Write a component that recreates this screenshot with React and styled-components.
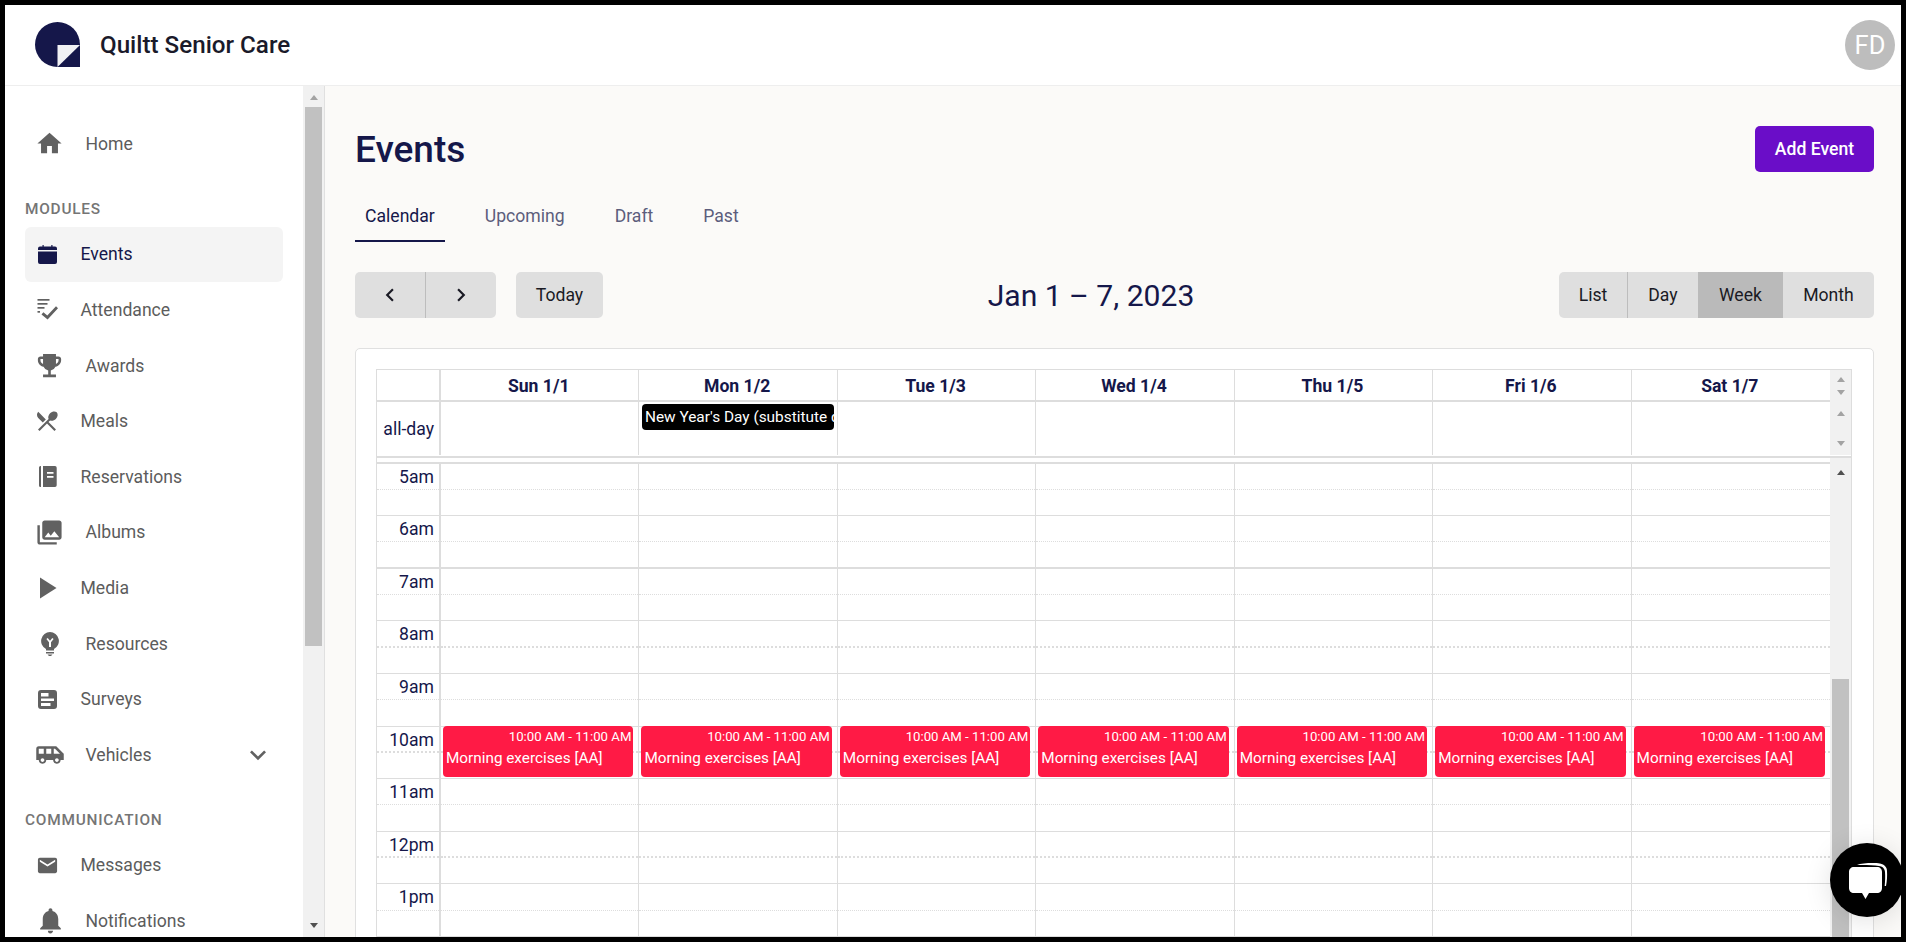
import React from "react";
import styled, { createGlobalStyle } from "styled-components";
import {
  MdHome, MdEmojiEvents, MdRestaurantMenu, MdPhotoLibrary, MdPlayArrow,
  MdAirportShuttle, MdExpandMore, MdEmail, MdNotifications, MdChevronLeft, MdChevronRight,
} from "react-icons/md";

const NAVY = "#15174a";
const COLUMNS = "64px repeat(7, minmax(0, 1fr)) 21px";

const Global = createGlobalStyle`
  html, body { margin: 0; padding: 0; height: 100%; overflow: hidden; background: #000; }
  * { box-sizing: border-box; }
  body { font-family: Roboto, "Liberation Sans", sans-serif; }
`;

const Frame = styled.div`
  position: relative;
  width: 1906px;
  height: 942px;
  border: 5px solid #000;
  background: #fff;
  display: flex;
  flex-direction: column;
  overflow: hidden;
`;

const Header = styled.header`
  flex: 0 0 81px;
  display: flex;
  align-items: center;
  justify-content: space-between;
  padding: 0 6px 1px 30px;
  background: #fff;
  border-bottom: 1px solid #eeeeee;
`;

const Brand = styled.div`
  display: flex;
  align-items: center;
  gap: 20px;
`;

const BrandName = styled.span`
  font-size: 24.2px;
  font-weight: 500;
  color: #1a1a2a;
`;

const Avatar = styled.div`
  width: 50px;
  height: 50px;
  border-radius: 50%;
  background: #bdbdbd;
  color: #fff;
  font-size: 25.5px;
  display: flex;
  align-items: center;
  justify-content: center;
`;

const Body = styled.div`
  flex: 1;
  min-height: 0;
  display: flex;
`;

const Sidebar = styled.aside`
  flex: 0 0 320px;
  display: flex;
  border-right: 1px solid #e0e0e0;
  overflow: hidden;
`;

const Nav = styled.nav`
  flex: 0 0 298px;
  padding: 30px 20px 0;
  overflow: hidden;
`;

const NavRow = styled.div`
  height: 55.6px;
  display: flex;
  align-items: center;
  padding-left: 12px;
  padding-right: 9px;
  border-radius: 6px;
  font-size: 17.6px;
  font-weight: 400;
  color: ${(p) => (p.$active ? NAVY : "#5c5c5c")};
  background: ${(p) => (p.$active ? "#f4f4f4" : "transparent")};
`;

const NavIcon = styled.span`
  flex: 0 0 ${(p) => (p.$wide ? "48.5px" : "43.5px")};
  display: flex;
  align-items: center;
  padding-left: ${(p) => p.$shift || 0}px;
`;

const NavLabel = styled.span`
  flex: 1;
`;

const SectionLabel = styled.div`
  font-size: 15.4px;
  font-weight: 500;
  letter-spacing: 0.77px;
  color: #757575;
  height: ${(p) => p.$h}px;
  display: flex;
  align-items: flex-end;
  padding-bottom: ${(p) => p.$pb}px;
`;

const ScrollTrack = styled.div`
  flex: 0 0 ${(p) => p.$w || 21}px;
  background: #f1f1f1;
  display: flex;
  flex-direction: column;
  align-items: center;
  justify-content: ${(p) => p.$justify || "flex-start"};
  padding-top: ${(p) => p.$pt || 0}px;
  padding-bottom: ${(p) => p.$pb || 0}px;
  gap: ${(p) => p.$gap || 0}px;
`;

const Arrow = styled.span`
  width: 0;
  height: 0;
  flex: none;
  border-left: 4.5px solid transparent;
  border-right: 4.5px solid transparent;
  ${(p) =>
    p.$down
      ? `border-top: 5px solid ${p.$color || "#a3a3a3"};`
      : `border-bottom: 5px solid ${p.$color || "#a3a3a3"};`}
`;

const Thumb = styled.div`
  flex: none;
  width: 17px;
  height: ${(p) => p.$h}px;
  margin-top: ${(p) => p.$mt}px;
  background: #c1c1c1;
`;

const Spring = styled.div`
  flex: 1;
`;

const Main = styled.main`
  flex: 1;
  min-width: 0;
  background: #fbfaf8;
  padding: 40px 27px 0 30px;
  overflow: hidden;
`;

const TitleRow = styled.div`
  display: flex;
  align-items: center;
  justify-content: space-between;
  height: 46px;
`;

const PageTitle = styled.h1`
  margin: 0;
  font-size: 37px;
  font-weight: 500;
  color: ${NAVY};
`;

const PrimaryButton = styled.button`
  width: 119px;
  height: 46px;
  border: 0;
  border-radius: 5px;
  background: #6a0dc8;
  color: #fff;
  font: 500 17.6px Roboto, sans-serif;
`;

const Tabs = styled.div`
  display: flex;
  gap: 30px;
  margin-top: 22px;
`;

const Tab = styled.div`
  height: 48px;
  padding: 0 10px 2px;
  display: flex;
  align-items: center;
  justify-content: center;
  font-size: 17.6px;
  font-weight: 400;
  color: ${(p) => (p.$active ? NAVY : "#5c5d7c")};
  border-bottom: 2px solid ${(p) => (p.$active ? NAVY : "transparent")};
`;

const Toolbar = styled.div`
  display: flex;
  justify-content: space-between;
  align-items: center;
  margin-top: 30px;
  height: 46px;
`;

const ToolLeft = styled.div`
  display: flex;
  gap: 20px;
`;

const RangeTitle = styled.h2`
  margin: 0 0 0 20px;
  font-size: 30.1px;
  font-weight: 400;
  color: ${NAVY};
`;

const ButtonGroup = styled.div`
  display: flex;
  border-radius: 5px;
  overflow: hidden;
`;

const CalButton = styled.button`
  width: ${(p) => p.$w}px;
  height: 46px;
  border: 0;
  border-right: ${(p) => (p.$divider ? "1px solid #bdbdbd" : "0")};
  border-radius: ${(p) => (p.$solo ? "5px" : "0")};
  background: ${(p) => (p.$active ? "#bababa" : "#dfdfdf")};
  color: #1a1a24;
  font: 400 17.6px Roboto, sans-serif;
  display: flex;
  align-items: center;
  justify-content: center;
  padding: 0;
`;

const Card = styled.section`
  margin-top: 30px;
  background: #fff;
  border: 1px solid #e0e0e0;
  border-radius: 5px;
  padding: 20px 21px 0 20px;
  height: 700px;
`;

const Table = styled.div`
  border: 1px solid #dddddd;
  border-bottom: 0;
`;

const HeadRow = styled.div`
  display: grid;
  grid-template-columns: ${COLUMNS};
  height: ${(p) => p.$h}px;
`;

const AxisHead = styled.div`
  border-right: 2px solid #dddddd;
  border-bottom: ${(p) => (p.$line ? "2px solid #dddddd" : "0")};
  display: flex;
  align-items: center;
  justify-content: flex-end;
  padding-right: 5px;
  font-size: 17.6px;
  color: ${NAVY};
`;

const DayHead = styled.div`
  min-width: 0;
  padding: ${(p) => (p.$pad ? "2px 3px 0 3px" : "1px 2px 0 0")};
  border-right: ${(p) => (p.$last ? "0" : "1px solid #dddddd")};
  border-bottom: ${(p) => (p.$line ? "2px solid #dddddd" : "0")};
  display: flex;
  align-items: ${(p) => (p.$pad ? "flex-start" : "center")};
  justify-content: center;
  font-size: 17.6px;
  font-weight: 700;
  color: ${NAVY};
`;

const AllDayEvent = styled.div`
  width: 100%;
  height: 26px;
  padding: 0 2.5px;
  background: #000;
  color: #fff;
  font-size: 15.4px;
  font-weight: 400;
  line-height: 26px;
  border-radius: 4px;
  white-space: nowrap;
  overflow: hidden;
`;

const Divider = styled.div`
  display: flex;
  height: 7.6px;
  margin-top: 1px;
  border-top: 2px solid #dddddd;
`;

const DividerFill = styled.div`
  flex: 1;
  border-bottom: 2px solid #dddddd;
`;

const DividerGutter = styled.div`
  flex: 0 0 21px;
  background: #f1f1f1;
`;

const TimeGrid = styled.div`
  display: grid;
  grid-template-columns: ${COLUMNS};
  height: 480px;
  overflow: hidden;
`;

const TimeAxis = styled.div`
  border-right: 2px solid #dddddd;
`;

const DayColumn = styled.div`
  min-width: 0;
  position: relative;
  border-right: ${(p) => (p.$last ? "0" : "1px solid #dddddd")};
`;

const Slot = styled.div`
  height: 26.3px;
  padding-right: 5px;
  text-align: right;
  font-size: 17.6px;
  line-height: 26px;
  color: ${NAVY};
  white-space: nowrap;
  border-bottom: ${(p) => (p.$thick ? 2 : 1)}px ${(p) => (p.$half ? "dotted" : "solid")} #dddddd;
`;

const EventBlock = styled.div`
  position: absolute;
  left: 2px;
  right: 5px;
  top: 262.5px;
  height: 51px;
  background: #ff1a45;
  border-radius: 4px;
  color: #fff;
  font-weight: 400;
  overflow: hidden;
`;

const EventTime = styled.div`
  font-size: 13.2px;
  text-align: right;
  padding: 3px 2px 0;
  line-height: 15px;
`;

const EventTitle = styled.div`
  font-size: 15.3px;
  padding: 5px 3px 0;
  line-height: 18px;
  white-space: nowrap;
`;

const ChatBubble = styled.div`
  position: absolute;
  left: 1825px;
  top: 838px;
  width: 74px;
  height: 74px;
  border-radius: 50%;
  background: #000;
  box-shadow: 0 4px 28px rgba(0, 0, 0, 0.12);
  display: flex;
  align-items: center;
  justify-content: center;
`;

const Logo = () => (
  <svg width="45" height="45" viewBox="0 0 45 45">
    <path d="M22.5 0A22.5 22.5 0 0 0 22.5 45H45V22.5A22.5 22.5 0 0 0 22.5 0Z" fill={NAVY} />
    <path d="M22.5 23H45L22.5 45Z" fill="#f1f1f4" />
  </svg>
);

const CalendarIcon = ({ color }) => (
  <svg width="19" height="19" viewBox="0 0 19 19">
    <path fill={color} d="M2 1.5h2.5V0h1.200v1.500h7.600V0h1.200v1.500H17a2 2 0 0 1 2 2V5H0V3.500a2 2 0 0 1 2-2ZM0 6.500h19V17a2 2 0 0 1-2 2H2a2 2 0 0 1-2-2Z" />
  </svg>
);

const AttendanceIcon = () => (
  <svg width="21" height="21" viewBox="0 0 21 21" fill="#616161">
    <rect x="0.5" y="0" width="12" height="1.7" />
    <rect x="0.5" y="4" width="10" height="1.7" />
    <rect x="0.5" y="8" width="7" height="1.7" />
    <rect x="0.5" y="12" width="2.5" height="1.7" />
    <path d="M19 7.300 21 9.300 10.600 20.500 4.500 15.500 6.400 13.300 10.300 16.500Z" />
  </svg>
);

const BookIcon = () => (
  <svg width="18" height="21" viewBox="0 0 18 21" fill="#616161">
    <path d="M0 1.500A1.500 1.500 0 0 1 1.500 0H2v21h-.5A1.500 1.500 0 0 1 0 19.500Z" />
    <path d="M4 0h12a1.700 1.700 0 0 1 1.700 1.700v17.600A1.700 1.700 0 0 1 16 21H4ZM8 6v1.800h6.500V6Zm0 4v1.800h6.500V10Z" fillRule="evenodd" />
  </svg>
);

const BulbIcon = () => (
  <svg width="18" height="24" viewBox="0 0 18 24" fill="#616161">
    <path fillRule="evenodd" d="M9 0a9 9 0 0 1 4 17v1.500H5V17A9 9 0 0 1 9 0ZM5.400 7 8 10.200V15h2v-4.800L12.600 7 11.300 6 9 8.800 6.700 6Z" />
    <path d="M5 20h8v1.500H5ZM6.500 22.500h5L10 24H8Z" />
  </svg>
);

const SurveyIcon = () => (
  <svg width="19" height="19" viewBox="0 0 19 19">
    <path fill="#616161" fillRule="evenodd" d="M3 0h13a3 3 0 0 1 3 3v13a3 3 0 0 1-3 3H3a3 3 0 0 1-3-3V3a3 3 0 0 1 3-3Zm0 3v3.500h7.500V3Zm0 5.500v2.500h13V8.500Zm0 4.500v3h9.500v-3Z" />
  </svg>
);

const ChatIcon = () => (
  <svg width="42" height="42" viewBox="0 0 42 42" fill="#fff">
    <path d="M11 6C16 4 28 3.500 34 4.500 38.500 5.500 41 8 41 12c.3 5 0 10-1 15h-1.300c.5-5 .6-10 .3-14C38.700 9 36 7.300 33 7 27 6 18 5.700 11 6Z" />
    <path d="M8 8h23c3 0 5 2 5 5v16c0 3-2 5-5 5h-8l-3.500 6-3.500-6H8c-3 0-5-2-5-5V13c0-3 2-5 5-5Z" />
  </svg>
);

const NavItem = ({ icon, label, wide, active, shift, trailing }) => (
  <NavRow $active={active}>
    <NavIcon $wide={wide} $shift={shift}>{icon}</NavIcon>
    <NavLabel>{label}</NavLabel>
    {trailing}
  </NavRow>
);

const days = ["Sun 1/1", "Mon 1/2", "Tue 1/3", "Wed 1/4", "Thu 1/5", "Fri 1/6", "Sat 1/7"];
const hours = ["5am", "6am", "7am", "8am", "9am", "10am", "11am", "12pm", "1pm", ""];
const thickFull = new Set(["6am"]);
const thickHalf = new Set(["8am", "10am", "12pm"]);

const Slots = ({ labels }) =>
  hours.map((h) => (
    <React.Fragment key={h}>
      <Slot $half $thick={thickHalf.has(h)}>{labels ? h : null}</Slot>
      <Slot $thick={thickFull.has(h)} />
    </React.Fragment>
  ));

export default function App() {
  const gray = "#616161";
  return (
    <>
      <Global />
      <Frame>
        <Header>
          <Brand>
            <Logo />
            <BrandName>Quiltt Senior Care</BrandName>
          </Brand>
          <Avatar>FD</Avatar>
        </Header>
        <Body>
          <Sidebar>
            <Nav>
              <NavItem wide label="Home" icon={<MdHome size={29} color={gray} style={{ marginLeft: -2 }} />} />
              <SectionLabel $h={55} $pb={9}>MODULES</SectionLabel>
              <NavItem active shift={1} label="Events" icon={<CalendarIcon color={NAVY} />} />
              <NavItem label="Attendance" icon={<AttendanceIcon />} />
              <NavItem wide label="Awards" icon={<MdEmojiEvents size={31} color={gray} style={{ marginLeft: -3 }} />} />
              <NavItem label="Meals" icon={<MdRestaurantMenu size={26} color={gray} style={{ marginLeft: -3 }} />} />
              <NavItem shift={2} label="Reservations" icon={<BookIcon />} />
              <NavItem wide label="Albums" icon={<MdPhotoLibrary size={29} color={gray} style={{ marginLeft: -2 }} />} />
              <NavItem label="Media" icon={<MdPlayArrow size={36} color={gray} style={{ marginLeft: -9, marginRight: -9 }} />} />
              <NavItem wide shift={4} label="Resources" icon={<BulbIcon />} />
              <NavItem shift={1} label="Surveys" icon={<SurveyIcon />} />
              <NavItem wide label="Vehicles" icon={<MdAirportShuttle size={30} color={gray} style={{ marginLeft: -2 }} />} trailing={<MdExpandMore size={32} color={gray} />} />
              <SectionLabel $h={55} $pb={9}>COMMUNICATION</SectionLabel>
              <NavItem label="Messages" icon={<MdEmail size={23} color={gray} style={{ marginLeft: -1 }} />} />
              <NavItem wide label="Notifications" icon={<MdNotifications size={31} color={gray} style={{ marginLeft: -2 }} />} />
            </Nav>
            <ScrollTrack $pt={9} $pb={9}>
              <Arrow />
              <Thumb $h={539} $mt={7} />
              <Spring />
              <Arrow $down $color="#505050" />
            </ScrollTrack>
          </Sidebar>
          <Main>
            <TitleRow>
              <PageTitle>Events</PageTitle>
              <PrimaryButton>Add Event</PrimaryButton>
            </TitleRow>
            <Tabs>
              <Tab $active>Calendar</Tab>
              <Tab>Upcoming</Tab>
              <Tab>Draft</Tab>
              <Tab>Past</Tab>
            </Tabs>
            <Toolbar>
              <ToolLeft>
                <ButtonGroup>
                  <CalButton $w={71} $divider><MdChevronLeft size={26} /></CalButton>
                  <CalButton $w={70}><MdChevronRight size={26} /></CalButton>
                </ButtonGroup>
                <CalButton $w={87} $solo>Today</CalButton>
              </ToolLeft>
              <RangeTitle>Jan 1 – 7, 2023</RangeTitle>
              <ButtonGroup>
                <CalButton $w={69} $divider>List</CalButton>
                <CalButton $w={70}>Day</CalButton>
                <CalButton $w={85} $active>Week</CalButton>
                <CalButton $w={91}>Month</CalButton>
              </ButtonGroup>
            </Toolbar>
            <Card>
              <Table>
                <HeadRow $h={32}>
                  <AxisHead $line />
                  {days.map((d, i) => (
                    <DayHead key={d} $line $last={i === 6}>{d}</DayHead>
                  ))}
                  <ScrollTrack $pt={7} $gap={8}>
                    <Arrow />
                    <Arrow $down />
                  </ScrollTrack>
                </HeadRow>
                <HeadRow $h={53}>
                  <AxisHead>all-day</AxisHead>
                  {days.map((d, i) => (
                    <DayHead key={d} $pad={i === 1} $last={i === 6}>
                      {i === 1 && <AllDayEvent>New Year's Day (substitute day)</AllDayEvent>}
                    </DayHead>
                  ))}
                  <ScrollTrack $justify="space-between" $pt={9} $pb={9}>
                    <Arrow />
                    <Arrow $down />
                  </ScrollTrack>
                </HeadRow>
                <Divider>
                  <DividerFill />
                  <DividerGutter />
                </Divider>
                <TimeGrid>
                  <TimeAxis><Slots labels /></TimeAxis>
                  {days.map((d, i) => (
                    <DayColumn key={d} $last={i === 6}>
                      <Slots />
                      <EventBlock>
                        <EventTime>10:00 AM - 11:00 AM</EventTime>
                        <EventTitle>Morning exercises [AA]</EventTitle>
                      </EventBlock>
                    </DayColumn>
                  ))}
                  <ScrollTrack $pt={6}>
                    <Arrow $color="#505050" />
                    <Thumb $h={300} $mt={204} />
                  </ScrollTrack>
                </TimeGrid>
              </Table>
            </Card>
          </Main>
        </Body>
        <ChatBubble><ChatIcon /></ChatBubble>
      </Frame>
    </>
  );
}
